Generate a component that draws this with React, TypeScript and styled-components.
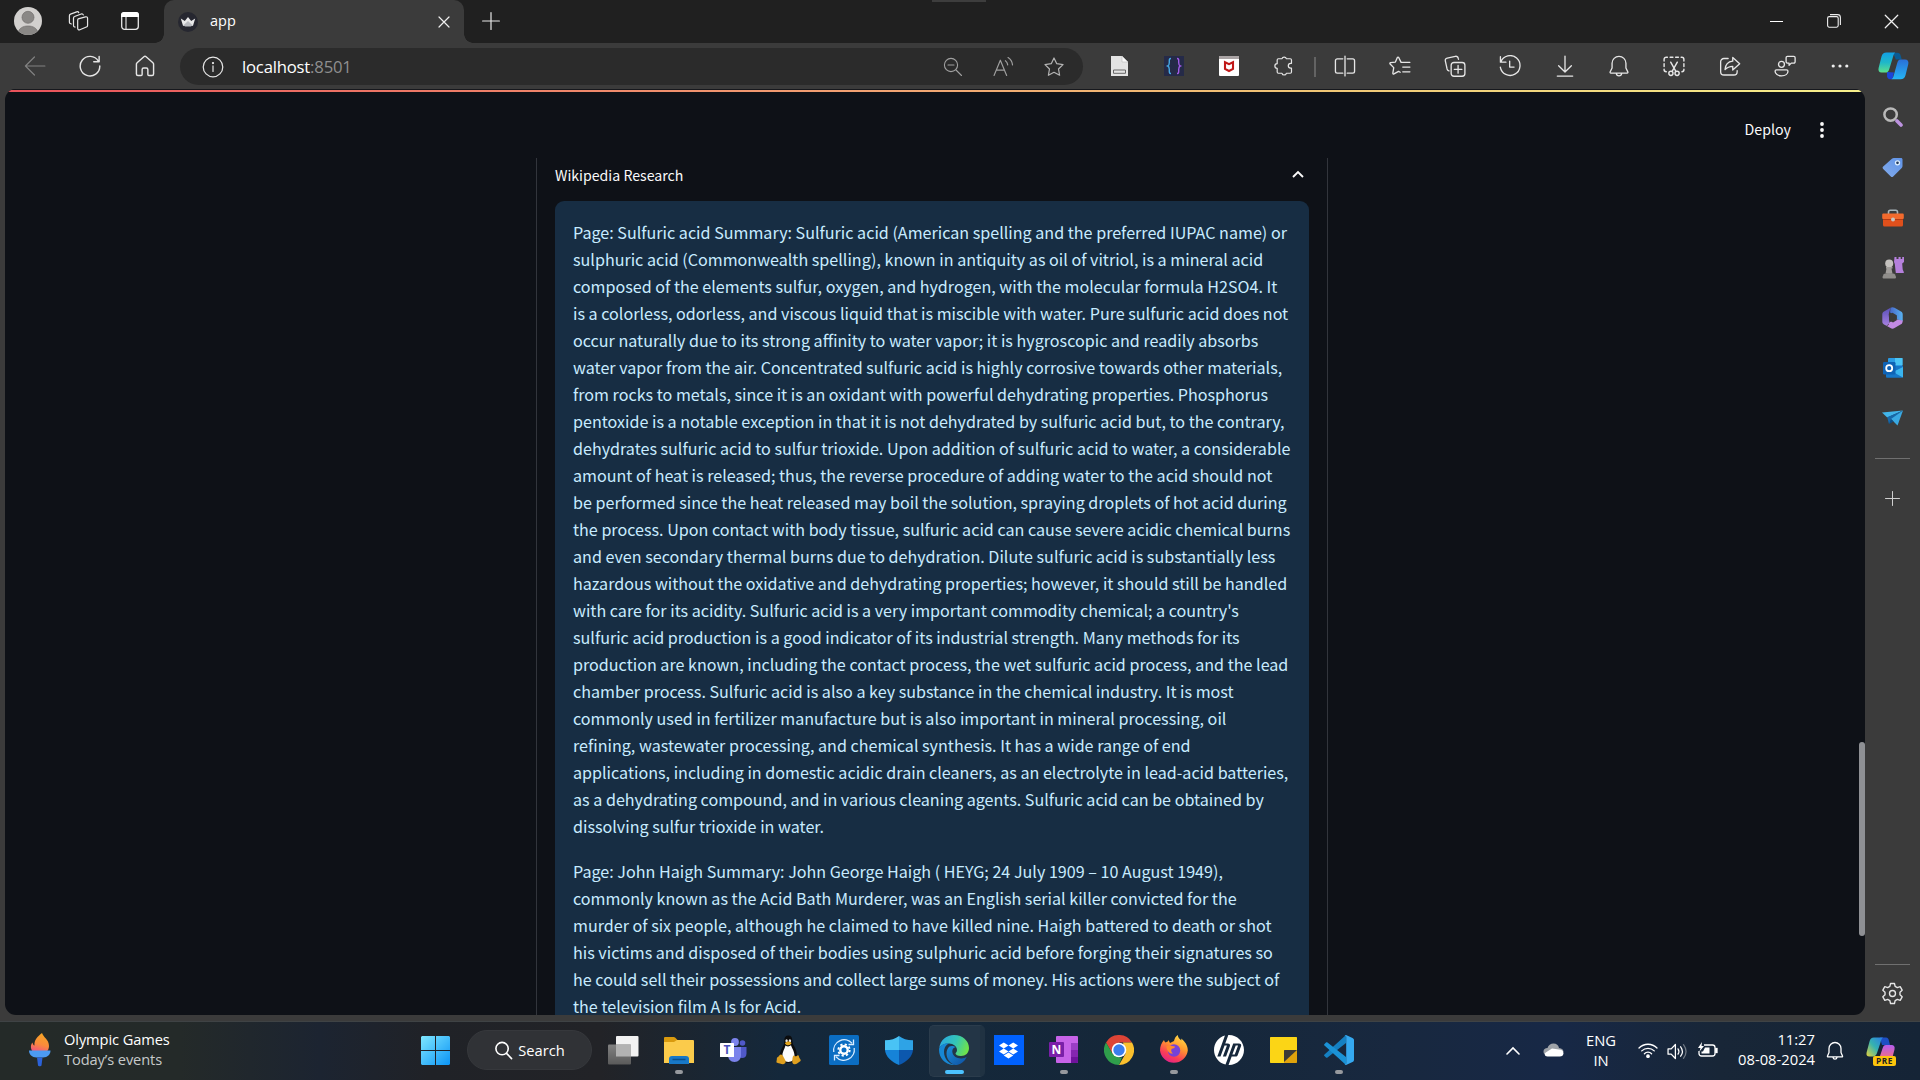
import React from "react";
import styled, { createGlobalStyle } from "styled-components";
import { SiHp, SiDropbox } from "react-icons/si";

const GlobalStyle = createGlobalStyle`
  * { box-sizing: border-box; }
  body { margin: 0; background: #202020; overflow: hidden; }
  p { margin: 0; }
  svg { display: block; flex: none; }
`;

const ui = `"Open Sans", "Noto Sans", sans-serif`;
const source = `"Noto Sans CJK JP", "Noto Sans", sans-serif`;

/* ---------- shell ---------- */
const Desktop = styled.div`
  width: 1920px;
  height: 1080px;
  display: flex;
  flex-direction: column;
  background: #3b3b3b;
  font-family: ${ui};
  color: #fff;
`;

const TabStrip = styled.header`
  height: 43px;
  background: #202020;
  display: flex;
  position: relative;
`;
const TopHandle = styled.div`
  position: absolute;
  left: 932px;
  top: 0;
  width: 54px;
  height: 2px;
  background: #3d3d3d;
`;
const StripTools = styled.div`
  width: 164px;
  padding: 0 6px 1px 1px;
  display: flex;
`;
const Slot = styled.div<{ $w?: number; $up?: number }>`
  width: ${(p) => p.$w ?? 55}px;
  padding-bottom: ${(p) => p.$up ?? 0}px;
  flex: none;
  display: flex;
  align-items: center;
  justify-content: center;
`;
const Tab = styled.div`
  width: 300px;
  background: #3b3b3b;
  border-radius: 10px 10px 0 0;
  display: flex;
  align-items: center;
  padding: 0 14px 0 14px;
  position: relative;
  &::before,
  &::after {
    content: "";
    position: absolute;
    bottom: 0;
    width: 9px;
    height: 9px;
  }
  &::before {
    left: -9px;
    background: radial-gradient(circle at 0 0, transparent 8.5px, #3b3b3b 9px);
  }
  &::after {
    right: -9px;
    background: radial-gradient(circle at 100% 0, transparent 8.5px, #3b3b3b 9px);
  }
`;
const TabTitle = styled.span`
  flex: 1;
  padding-left: 12px;
  font-size: 14.5px;
  line-height: 20px;
  margin-top: -2px;
`;
const WindowButtons = styled.div`
  margin-left: auto;
  display: flex;
`;

const Toolbar = styled.nav`
  height: 46px;
  display: flex;
  padding: 0 0 0 7px;
  align-items: stretch;
`;
const AddressBar = styled.div`
  width: 903px;
  flex: none;
  height: 37px;
  margin: 5px 9px 0 8px;
  border-radius: 19px;
  background: #2b2b2b;
  display: flex;
  padding-left: 5px;
  padding-right: 4px;
`;
const Url = styled.span`
  flex: 1;
  padding-left: 2px;
  font-size: 16.7px;
  line-height: 37px;
  letter-spacing: -0.2px;
  em { font-style: normal; color: #8f8f8f; }
`;
const ToolDivider = styled.div`
  width: 2px;
  height: 20px;
  margin: 14px 1px 0 2px;
  background: #636363;
`;

const Body = styled.div`
  height: 932px;
  display: flex;
  padding-left: 5px;
`;
const Page = styled.main`
  width: 1860px;
  height: 926px;
  border-radius: 11px;
  background: #0e1117;
  overflow: hidden;
  display: flex;
  flex-direction: column;
  position: relative;
`;
const Rainbow = styled.div`
  height: 3px;
  border-top: 1px solid #16181d;
  flex: none;
  background: linear-gradient(90deg, #e8525b, #f2a072 45%, #efc575 70%, #f6f08c);
`;
const AppHeader = styled.div`
  height: 66px;
  flex: none;
  display: flex;
  justify-content: flex-end;
  align-items: center;
  padding: 9px 35px 0 0;
  gap: 23px;
`;
const Deploy = styled.span`
  font: 14.2px/24px ${source};
  color: #fafafa;
  padding-bottom: 2px;
`;
const Kebab = styled.div`
  width: 16px;
  display: flex;
  justify-content: center;
`;
const Scrollbar = styled.div`
  position: absolute;
  right: 0;
  top: 653px;
  width: 6px;
  height: 194px;
  border-radius: 3px;
  background: #8e9094;
`;
const Expander = styled.section`
  width: 792px;
  height: 857px;
  margin-left: 531px;
  border: solid #32353c;
  border-width: 0 1px;
  padding: 0 18px 0 18px;
  font-family: ${source};
`;
const ExpanderHead = styled.div`
  height: 43px;
  display: flex;
  align-items: center;
  justify-content: space-between;
  padding: 0 5px 10px 0;
  font-size: 14.15px;
  line-height: 24px;
  color: #fafafa;
  svg { margin-top: -1px; }
`;
const InfoBox = styled.div`
  background: #172d43;
  color: #c7ebff;
  border-radius: 9px;
  padding: 18px 17px 18px 18px;
  height: 837px;
  display: flex;
  flex-direction: column;
  gap: 18px;
`;
const Line = styled.span`
  display: block;
  height: 27px;
  font-size: 16.13px;
  line-height: 27px;
  white-space: nowrap;
`;

const Sidebar = styled.aside`
  width: 55px;
  display: flex;
  flex-direction: column;
  align-items: center;
  padding-top: 2px;
`;
const SideItem = styled.div<{ $h?: number }>`
  height: ${(p) => p.$h ?? 50}px;
  display: flex;
  align-items: center;
`;
const SideRule = styled.div`
  width: 35px;
  height: 1px;
  background: #707070;
`;
const Spacer = styled.div`
  flex: 1;
`;

/* ---------- taskbar ---------- */
const Taskbar = styled.footer`
  height: 59px;
  border-top: 1px solid #3f4345;
  display: flex;
  align-items: stretch;
  background: linear-gradient(
    90deg,
    #242a28 0,
    #242a29 180px,
    #1c2431 320px,
    #202227 430px,
    #222327 600px,
    #14283b 780px,
    #152739 1150px,
    #18283f 1400px,
    #172846 1560px,
    #182637 1720px,
    #152436 1920px
  );
`;
const Widget = styled.div`
  width: 408px;
  display: flex;
  padding: 7px 0 0 28px;
  gap: 12px;
  svg { margin-top: 4px; }
`;
const WidgetText = styled.div`
  font-size: 14.65px;
  line-height: 20px;
  letter-spacing: -0.1px;
  span { display: block; color: #c6c9c9; }
`;
const SearchPill = styled.div`
  width: 125px;
  height: 40px;
  margin: 8px 4px 0 4px;
  border-radius: 20px;
  background: #303236;
  border: 1px solid #36383c;
  display: flex;
  align-items: center;
  justify-content: center;
  gap: 5px;
  font-size: 14.7px;
`;
const AppButton = styled.div<{ $active?: boolean }>`
  width: 55px;
  flex: none;
  position: relative;
  display: flex;
  align-items: center;
  justify-content: center;
  padding-bottom: 2px;
  z-index: 0;
  &::before {
    content: "";
    display: ${(p) => (p.$active ? "block" : "none")};
    position: absolute;
    z-index: -1;
    left: 3px;
    top: 3px;
    width: 50px;
    height: 50px;
    border-radius: 5px;
    background: #233546;
    border: 1px solid #2b3c4c;
    border-right: 5px solid #203242;
  }
`;
const Marker = styled.i<{ $active?: boolean }>`
  position: absolute;
  bottom: 6px;
  left: 50%;
  width: ${(p) => (p.$active ? 19 : 8)}px;
  height: 4px;
  margin-left: ${(p) => (p.$active ? -9 : -4)}px;
  border-radius: 2px;
  background: ${(p) => (p.$active ? "#4cc2ff" : "#96999e")};
`;
const Tray = styled.div`
  margin-left: auto;
  width: 427px;
  display: flex;
`;
const TrayText = styled.div<{ $w: number; $right?: boolean }>`
  width: ${(p) => p.$w}px;
  padding-top: ${(p) => (p.$right ? 7 : 8)}px;
  text-align: ${(p) => (p.$right ? "right" : "center")};
  font-size: 14.75px;
  line-height: 20px;
  white-space: nowrap;
  display: flex;
  flex-direction: column;
`;

/* ---------- icons ---------- */
type IconProps = { s?: number; w?: number; c?: string; children: React.ReactNode };
const Ico = ({ s = 22, w = 1.1, c = "#e6e6e6", children }: IconProps) => (
  <svg width={s} height={s} viewBox="0 0 20 20" fill="none" stroke={c} strokeWidth={w} strokeLinecap="round" strokeLinejoin="round">
    {children}
  </svg>
);

const Avatar = () => (
  <svg width="28" height="28" viewBox="0 0 28 28">
    <defs><clipPath id="av"><circle cx="14" cy="14" r="14" /></clipPath></defs>
    <g clipPath="url(#av)">
      <rect width="28" height="28" fill="#d2d0ce" />
      <circle cx="14" cy="10.3" r="6" fill="#8a8886" stroke="#72706e" strokeWidth=".7" />
      <path d="M4 26c1-5 5-7 10-7s9 2 10 7v4H4z" fill="#8a8886" stroke="#72706e" strokeWidth=".7" />
    </g>
  </svg>
);
const Workspaces = () => (
  <Ico s={22} w={1.1}>
    <path d="M10.2 8.1l6.6-1.9c1-.3 1.9.4 1.9 1.4v6.4c0 .7-.5 1.3-1.1 1.5l-5.9 2.5c-1 .4-2-.2-2-1.3V9.5c0-.7 0-1.2.5-1.4z" />
    <path d="M7.3 15.5l-.6-.2c-.5-.2-.8-.6-.8-1.2V7.4c0-.8.4-1.3 1-1.5l6-2.3c.8-.3 1.6 0 1.9.8" />
    <path d="M3.9 12.7l-.9-.4c-.5-.2-.8-.6-.8-1.2V5.2c0-.8.4-1.3 1-1.5l5.6-2c.8-.3 1.6 0 1.9.8" />
  </Ico>
);
const TabActions = () => (
  <svg width="18" height="18" viewBox="0 0 18 18">
    <rect x=".7" y=".7" width="16.6" height="16.6" rx="2.8" fill="none" stroke="#e8e8e8" strokeWidth="1.3" />
    <path d="M0 5V3a3 3 0 0 1 3-3h12a3 3 0 0 1 3 3v2z" fill="#fff" />
    <path d="M5 5v12.5" stroke="#e8e8e8" strokeWidth="1.1" />
  </svg>
);
const Crown = () => (
  <svg width="20" height="20" viewBox="0 0 20 20">
    <circle cx="10" cy="10" r="10" fill="#262730" />
    <path d="M2.8 6.4l4 2.6L10 5l3.2 4 4-2.6-2.2 7.3c-3 .8-7 .8-10 0z" fill="#e9e9ea" />
    <path d="M5 13.7L10 9l5 4.7c-3 .8-7 .8-10 0z" fill="#b9bbc0" />
  </svg>
);
const Cross = ({ s = 12, w = 1.2 }: { s?: number; w?: number }) => (
  <svg width={s} height={s} viewBox="0 0 12 12" stroke="#f0f0f0" strokeWidth={w} strokeLinecap="round"><path d="M1 1l10 10M11 1L1 11" /></svg>
);
const Plus = ({ s = 18, c = "#e8e8e8" }: { s?: number; c?: string }) => (
  <svg width={s} height={s} viewBox="0 0 18 18" stroke={c} strokeWidth="1.2" strokeLinecap="round"><path d="M9 .6v16.8M.6 9h16.8" /></svg>
);

const STAR = "M10 1.8l2.5 5.2 5.7.8-4.1 4 1 5.7L10 14.8l-5.1 2.7 1-5.7-4.1-4 5.7-.8z";

const Copilot = () => (
  <svg width="31" height="28" viewBox="0 0 31 28">
    <defs>
      <linearGradient id="cpa" x1="0" y1="0" x2="0" y2="1"><stop offset="0" stopColor="#12a0e6" /><stop offset=".5" stopColor="#20b8c8" /><stop offset="1" stopColor="#5fe08a" /></linearGradient>
      <linearGradient id="cpb" x1="0" y1="0" x2="0" y2="1"><stop offset="0" stopColor="#2a6fd8" /><stop offset="1" stopColor="#25b5f4" /></linearGradient>
    </defs>
    <path d="M15 .8h4.500c1.800 0 2.600 1 3.100 2.800l1.200 3.800h-6z" fill="#0a5b93" />
    <path d="M9 20l7 .5-1.600 6.700H12c-1.700 0-2.400-1-2.900-2.700z" fill="#1b45d8" />
    <path d="M8.500.6h8.700c-1 .8-1.500 2-2 3.600l-3.800 12.500c-.7 2.500-2 3.900-4.300 3.900H3.600C1 20.600 0 18.500.6 16L3.500 4.600C4.200 2 5.800.6 8.500.6z" fill="url(#cpa)" />
    <path d="M22.500 7.500h4.400c2.800 0 4 2 3.400 4.500l-2.800 11.300c-.7 2.600-2.200 4-5 4h-9c1.200-.7 1.700-2 2.200-3.700l3.400-12.200c.7-2.500 1.600-3.900 3.400-3.900z" fill="url(#cpb)" />
  </svg>
);

const Penguin = () => (
  <svg width="25" height="30" viewBox="0 0 25 30">
    <path d="M12.300.5c2.700 0 4 2 4 4.800 0 3.200 1.200 4.700 2.700 7.500 1.500 3 2.300 6 1.500 9.200-.5 3-4 6-8.200 6S4.500 25.500 4 22.500c-.6-3.500.6-7 2.300-10C7.700 10 8.400 8.500 8.300 5.500 8.200 2.500 9.500.5 12.300.5z" fill="#0b0c0e" />
    <path d="M9.500 10.500c1.700 1.200 3.800 1.200 5.500-.2 1 3 3.800 6.700 3.500 11-.3 3.700-3 5.700-6.200 5.700s-5.800-2.300-6-5.700c-.2-3.700 2.200-7.300 3.200-10.800z" fill="#fdfdfd" />
    <ellipse cx="10.6" cy="5.7" rx="1.2" ry="1.5" fill="#e8e8e8" />
    <ellipse cx="13.9" cy="5.7" rx="1.2" ry="1.5" fill="#e8e8e8" />
    <path d="M8.800 8.200c1-1 2.200-1.700 3.500-1.700s2.500.6 3.300 1.500c-.7 1.300-2 2.300-3.400 2.300s-2.700-.9-3.400-2.100z" fill="#e3a51c" />
    <path d="M1.800 22c1.200-.5 1.700-2.500 3.200-2.500 1.800 0 3 3.500 4.200 5.500 1 1.700.3 4-2 4.200-2.200.1-4-1-6-1.400C-.3 27.500.8 26 .8 24.500c0-1 0-2 1-2.500zM17.500 20.500c1 1.200 3.500 1 4.500-.5 1.200.6.8 2.300 1.800 3.500 1.500 1.700 1 2.500-.6 3.500-1.700 1-2.600 2.500-4.700 2.300-2-.2-2.400-2-2.200-4 .2-1.700.2-3.700 1.200-4.800z" fill="#dfa01f" />
  </svg>
);

/* ---------- page content ---------- */
const PARAGRAPHS: string[][] = [
  [
    "Page: Sulfuric acid Summary: Sulfuric acid (American spelling and the preferred IUPAC name) or",
    "sulphuric acid (Commonwealth spelling), known in antiquity as oil of vitriol, is a mineral acid",
    "composed of the elements sulfur, oxygen, and hydrogen, with the molecular formula H2SO4. It",
    "is a colorless, odorless, and viscous liquid that is miscible with water. Pure sulfuric acid does not",
    "occur naturally due to its strong affinity to water vapor; it is hygroscopic and readily absorbs",
    "water vapor from the air. Concentrated sulfuric acid is highly corrosive towards other materials,",
    "from rocks to metals, since it is an oxidant with powerful dehydrating properties. Phosphorus",
    "pentoxide is a notable exception in that it is not dehydrated by sulfuric acid but, to the contrary,",
    "dehydrates sulfuric acid to sulfur trioxide. Upon addition of sulfuric acid to water, a considerable",
    "amount of heat is released; thus, the reverse procedure of adding water to the acid should not",
    "be performed since the heat released may boil the solution, spraying droplets of hot acid during",
    "the process. Upon contact with body tissue, sulfuric acid can cause severe acidic chemical burns",
    "and even secondary thermal burns due to dehydration. Dilute sulfuric acid is substantially less",
    "hazardous without the oxidative and dehydrating properties; however, it should still be handled",
    "with care for its acidity. Sulfuric acid is a very important commodity chemical; a country's",
    "sulfuric acid production is a good indicator of its industrial strength. Many methods for its",
    "production are known, including the contact process, the wet sulfuric acid process, and the lead",
    "chamber process. Sulfuric acid is also a key substance in the chemical industry. It is most",
    "commonly used in fertilizer manufacture but is also important in mineral processing, oil",
    "refining, wastewater processing, and chemical synthesis. It has a wide range of end",
    "applications, including in domestic acidic drain cleaners, as an electrolyte in lead-acid batteries,",
    "as a dehydrating compound, and in various cleaning agents. Sulfuric acid can be obtained by",
    "dissolving sulfur trioxide in water.",
  ],
  [
    "Page: John Haigh Summary: John George Haigh ( HEYG; 24 July 1909 – 10 August 1949),",
    "commonly known as the Acid Bath Murderer, was an English serial killer convicted for the",
    "murder of six people, although he claimed to have killed nine. Haigh battered to death or shot",
    "his victims and disposed of their bodies using sulphuric acid before forging their signatures so",
    "he could sell their possessions and collect large sums of money. His actions were the subject of",
    "the television film A Is for Acid.",
  ],
];

const BrowserTools = () => (
  <>
    <Slot><svg width="17" height="20" viewBox="0 0 17 20"><path d="M0 0h11l6 6v14H0z" fill="#e3e3e3" /><path d="M11 0v6h6z" fill="#fafafa" stroke="#bbb" strokeWidth=".6" /><path d="M2.500 14h12v3.300h-12z" fill="none" stroke="#666" strokeWidth="1" /></svg></Slot>
    <Slot $w={54}><svg width="20" height="20" viewBox="0 0 20 20" fill="none" strokeWidth="1.400"><rect width="20" height="20" fill="#252a48" /><path d="M7 2.500c-2 0-1.700 1.500-1.700 4 0 2-.2 3-1.500 3.500 1.300.5 1.500 1.500 1.500 3.500 0 2.500-.3 4 1.700 4" stroke="#45a9e6" /><path d="M13 2.500c2 0 1.700 1.500 1.700 4 0 2 .2 3 1.500 3.500-1.300.5-1.500 1.500-1.500 3.500 0 2.500.3 4-1.700 4" stroke="#a35be8" /></svg></Slot>
    <Slot><svg width="20" height="20" viewBox="0 0 20 20"><rect width="20" height="20" rx="1" fill="#fff" /><path d="M0 0h20v3H0z" fill="#a9a3a4" /><path d="M6 6.200l4 2 4-2v6.600l-4 2.200-4-2.200z" fill="none" stroke="#c01818" strokeWidth="2.100" /></svg></Slot>
    <Slot $w={56}><Ico><path d="M8.200 3.400a2 2 0 0 1 3.900 0h3.600c.6 0 1.100.5 1.100 1.100v3.100h-.7a2.200 2.200 0 0 0 0 4.400h.7v3.500c0 .6-.5 1.100-1.100 1.100h-3.600a2 2 0 0 1-3.900 0H4.900c-.6 0-1.100-.5-1.100-1.100v-3.400a2.100 2.100 0 0 1 0-4.200V4.500c0-.6.5-1.100 1.100-1.100z" /></Ico></Slot>
    <ToolDivider />
    <Slot><Ico w={1.2}><path d="M8 3.500H3c-1 0-1.700.7-1.700 1.700v9.600c0 1 .7 1.700 1.700 1.700h5M12 3.500h5c1 0 1.700.7 1.700 1.700v9.600c0 1-.7 1.700-1.700 1.700h-5M10 1v18" /></Ico></Slot>
    <Slot><Ico w={1.2}><path d="M13.200 6.700H11L8.800 2.200a.7.700 0 0 0-1.200 0L5.800 6.400l-4.400.6c-.6.1-.8.700-.4 1.100l3.300 3.400-.8 5c-.1.600.4 1 1 .7l4.200-2.300 1.500.8M12.500 6.700h6.500M12.500 11h6.500M12.500 15.300h6.500" /></Ico></Slot>
    <Slot><Ico w={1.2}><rect x="6.5" y="6.8" width="12.5" height="12.5" rx="2.5" /><path d="M12.800 9.500v7M9.300 13h7M4.500 14.500c-1-.3-1.500-1-1.700-1.800L1.200 5.400c-.3-1.300.4-2.300 1.700-2.600l7.400-1.600c1.300-.3 2.300.4 2.600 1.700l.3 1" /></Ico></Slot>
    <Slot><Ico w={1.2}><path d="M1.300 1.500v5h5M1.700 6.300A9 9 0 1 1 1.200 11M9.700 5.500V11h4" /></Ico></Slot>
    <Slot><Ico w={1.2}><path d="M10 1v14.300M4.200 9.800l5.800 5.700 5.800-5.700M3 19.200h14" /></Ico></Slot>
    <Slot $w={54}><Ico w={1.2}><path d="M10 1.200a6.300 6.300 0 0 0-6.300 6.300v4.300L2 15.300c-.3.600 0 1.100.6 1.100h14.800c.6 0 .9-.5.6-1.100l-1.700-3.500V7.500A6.300 6.300 0 0 0 10 1.200zM7.500 16.600c.2 1.500 1.200 2.400 2.500 2.400s2.300-.9 2.500-2.400" /></Ico></Slot>
    <Slot $w={56}><Ico w={1.3}><path d="M1 5.500V4c0-1.300.8-2 2-2h1M6.500 2h2.500M11.500 2H14M16.500 2h.6c1.200 0 1.900.8 1.900 2v1.500M19 8v2.500M19 13v.5c0 1-.8 1.700-1.800 1.700M1 8v2.500M1 13v.5c0 1 .8 1.700 2 1.700" /><path d="M7 6.500l4.700 8.300M13 6.500l-4.700 8.300" /><circle cx="7.200" cy="16.700" r="1.900" /><circle cx="12.800" cy="16.700" r="1.900" /></Ico></Slot>
    <Slot><Ico w={1.2}><path d="M8.300 3.200H4.500A3 3 0 0 0 1.500 6.200v9a3 3 0 0 0 3 3h9a3 3 0 0 0 3-3v-1" /><path d="M12.500 2.200l6.300 5.800-6.300 5.700v-3.400c-3.300 0-5 .8-7 3 .3-4.700 2.700-7.300 7-7.700z" /></Ico></Slot>
    <Slot><Ico w={1.2}><circle cx="6.800" cy="8.500" r="2.700" /><path d="M2.200 13.500h9.300c.8 0 1.200.5 1.200 1.200 0 2.500-2.400 4.300-5.800 4.300S1 17.200 1 14.700c0-.7.5-1.200 1.200-1.200zM12.200 1.200h5.800c.7 0 1.200.5 1.200 1.200v3.800c0 .7-.5 1.200-1.200 1.200h-2.300l-2 1.900V7.400h-1.500c-.7 0-1.200-.5-1.200-1.200V2.400c0-.7.5-1.200 1.200-1.200z" /></Ico></Slot>
    <Slot><svg width="18" height="4" viewBox="0 0 18 4" fill="#eee"><circle cx="2.200" cy="2" r="1.600" /><circle cx="9" cy="2" r="1.600" /><circle cx="15.800" cy="2" r="1.600" /></svg></Slot>
    <Slot $w={53}><Copilot /></Slot>
  </>
);

const SideIcons = () => (
  <>
    <SideItem $h={51}>
      <svg width="20" height="20" viewBox="0 0 20 20" fill="none"><circle cx="7.600" cy="7.600" r="6.200" stroke="#b9b9b9" strokeWidth="2.500" /><path d="M14 14l4 4" stroke="#bd93e0" strokeWidth="3.600" strokeLinecap="round" /></svg>
    </SideItem>
    <SideItem>
      <svg width="21" height="21" viewBox="0 0 21 21"><defs><linearGradient id="tg" x1="1" y1="0" x2="0" y2="1"><stop stopColor="#5f93e8" /><stop offset="1" stopColor="#83abea" /></linearGradient></defs><path d="M12 1h7c.9 0 1.500.6 1.500 1.500V9c0 .8-.2 1.300-.8 1.900l-8.500 8.500c-.8.800-1.600.8-2.400 0L1.200 12c-.8-.8-.8-1.600 0-2.400l8.700-7.900c.6-.5 1.200-.7 2.100-.7z" fill="url(#tg)" /><circle cx="15.500" cy="5.800" r="2" fill="#23395c" stroke="#dff0ff" strokeWidth="1.300" /></svg>
    </SideItem>
    <SideItem $h={51}>
      <svg width="22" height="18" viewBox="0 0 22 18"><path d="M6.500 5V3c0-1.200.6-1.800 1.800-1.800h5.400c1.200 0 1.800.6 1.800 1.800v2" fill="none" stroke="#a8b4ba" strokeWidth="1.600" /><rect x="1" y="8" width="20" height="9.500" rx="1.500" fill="#e0501c" /><path d="M1.500 4.500h19c.8 0 1.300.5 1.300 1.300v2.700c0 1.400-.8 2-2 2H2.200c-1.200 0-2-.6-2-2V5.800c0-.8.500-1.300 1.300-1.300z" fill="#f26a2d" /><path d="M1 10.500h20" stroke="#b63a12" /><circle cx="11" cy="10.600" r="2" fill="#c9c4c0" /></svg>
    </SideItem>
    <SideItem $h={49}>
      <svg width="22" height="22" viewBox="0 0 22 22"><path d="M12.500 0h2v2h2V0h2.200v2h1.500V0H22v5l-1.800 1.500.5 6 1.100 2.500v1h-8l-1-9-.8-2z" fill="#b580dc" /><circle cx="7.200" cy="6.500" r="4" fill="#c4c1be" /><path d="M4 10h6.500v1.500H9.500l1 5h-7l1-5H4z" fill="#a09d9a" /><path d="M1.500 17.500c1.500-2 10-2 11.500 0l1 2.500c0 1-.5 1.500-1.500 1.500H2c-1 0-1.500-.5-1.500-1.500z" fill="#8f8d8a" /></svg>
    </SideItem>
    <SideItem $h={51}>
      <svg width="21" height="22" viewBox="0 0 21 22"><defs><linearGradient id="ma" x1="0" x2="0" y1="0" y2="1"><stop stopColor="#5a50b8" /><stop offset="1" stopColor="#a780e0" /></linearGradient><linearGradient id="mb"><stop stopColor="#4767c9" /><stop offset="1" stopColor="#58b2f1" /></linearGradient></defs><path d="M8.500.8L2 4.600C.8 5.300.3 6.200.3 7.500v7c0 1.300.5 2.200 1.700 2.900l2.500 1.400 3-2.500-.8-9z" fill="url(#ma)" /><path d="M8.500.8c1.300-.8 2.700-.8 4 0L19 4.600c1.200.7 1.700 1.600 1.700 2.900v6.700l-6-2V8.800L8 5.500z" fill="url(#mb)" /><path d="M20.700 13.500c0 2-.4 3-1.700 3.800l-6.500 3.800c-1.300.8-2.700.8-4 0L4 18.500c2 .5 3-.4 3-2.200l1-1.300 6.500-2.600z" fill="#c38ae4" /><path d="M7 7.800l3.500-2 4.200 2.500v5l-3.700 2.200-4-2.300z" fill="#3b3b3b" /></svg>
    </SideItem>
    <SideItem>
      <svg width="20" height="20" viewBox="0 0 20 20"><rect x="5" y="0" width="14.500" height="14" rx="1" fill="#2a9be4" /><path d="M12 0h7.500v7H12z" fill="#4ac4f4" /><path d="M3 8h17v10.500c0 .8-.5 1.300-1.300 1.300H4.300c-.8 0-1.300-.5-1.300-1.300z" fill="#1677c8" /><path d="M20 9v10.500L10 14z" fill="#3ab5ef" /><rect x="0" y="4" width="12.500" height="12.500" rx="1.300" fill="#0f63b5" /><circle cx="6.200" cy="10.200" r="3" fill="none" stroke="#fff" strokeWidth="1.800" /></svg>
    </SideItem>
    <SideItem>
      <svg width="21" height="16" viewBox="0 0 21 16"><path d="M21 .5L0 2.500l5.200 5z" fill="#41b5ea" /><path d="M21 .5L5.200 7.200 7 14l3-4z" fill="#1768a8" /><path d="M21 .5L9 9l6.500 6.500z" fill="#3aa9e2" /><path d="M7 14l2-5 2.700 2.500z" fill="#0e4e86" /></svg>
    </SideItem>
    <SideItem $h={15}>{null}</SideItem>
    <SideRule />
    <SideItem $h={78}><Plus s={15} c="#cfcfcf" /></SideItem>
    <Spacer />
    <SideRule />
    <SideItem $h={56}>
      <Ico s={23} w={1.2}><path d="M8.300 1.300h3.400l.6 2.500 1.900 1.100 2.500-.8 1.700 3-1.900 1.800v2.200l1.900 1.800-1.700 3-2.500-.8-1.900 1.100-.6 2.500H8.300l-.6-2.500-1.900-1.100-2.500.8-1.700-3 1.900-1.800V8.900L1.600 7.100l1.700-3 2.500.8 1.900-1.100z" /><circle cx="10" cy="10" r="2.600" /></Ico>
    </SideItem>
  </>
);

const TaskApps = () => (
  <>
    <AppButton>
      <svg width="31" height="29" viewBox="0 0 31 29"><defs><linearGradient id="tv" x1="0" x2="0" y1="0" y2="1"><stop stopColor="#828282" /><stop offset="1" stopColor="#5a5a5a" /></linearGradient></defs><rect x="8" y="0" width="22.500" height="20.500" rx="1" fill="#f2f2f2" /><rect x="0" y="8.500" width="23" height="20" rx="1" fill="url(#tv)" /><path d="M8 8.500h15v12H8z" fill="#b2b2b2" /></svg>
    </AppButton>
    <AppButton>
      <svg width="30" height="28" viewBox="0 0 30 28"><path d="M0 2.200C0 1.400.5 1 1.200 1h8.500c.6 0 1 .2 1.400.6L13.500 4V9H0z" fill="#d99a0e" /><path d="M0 6h10l3-2h15.800c.7 0 1.200.5 1.200 1.200V27H0z" fill="#fbcb4b" /><path d="M5 28v-5c0-2 1-3 3-3h14c2 0 3 1 3 3v5z" fill="#1878c7" /><path d="M8.500 23.500h13" stroke="#0b4f8a" strokeWidth="1.500" /></svg>
      <Marker />
    </AppButton>
    <AppButton>
      <svg width="27" height="24" viewBox="0 0 27 24"><circle cx="22.500" cy="5" r="2.800" fill="#5059c9" /><circle cx="15" cy="4" r="3.900" fill="#7b83eb" /><path d="M18 9h8.500v6.500c0 3-1.700 4.500-4.300 4.500S18 18 18 16z" fill="#5059c9" /><path d="M8 9h13v8c0 4-2.500 7-6.500 7S8 21 8 17z" fill="#7b83eb" /><rect x="0" y="5" width="14" height="14" rx=".6" fill="#fff" /><text x="7" y="16.200" fontFamily="Open Sans" fontWeight="700" fontSize="12" fill="#4b53bc" textAnchor="middle">T</text></svg>
    </AppButton>
    <AppButton><Penguin /></AppButton>
    <AppButton>
      <svg width="30" height="30" viewBox="0 0 30 30" fill="none"><rect width="30" height="30" rx="1.500" fill="#0b6dc2" /><path d="M4.800 17A10.500 10.500 0 0 1 23 8.300M25.200 13A10.500 10.500 0 0 1 7 21.700" stroke="#d8ecff" strokeWidth="1.300" /><path d="M24.500 4.500v5h-5M5.500 25.500v-5h5" stroke="#d8ecff" strokeWidth="1.300" /><circle cx="15" cy="15" r="3.700" stroke="#fff" strokeWidth="2.400" /><circle cx="15" cy="15" r="5.700" stroke="#fff" strokeWidth="1.900" strokeDasharray="2.200 2.280" /></svg>
    </AppButton>
    <AppButton>
      <svg width="28" height="29" viewBox="0 0 28 29"><path d="M14 0c3.500 2.800 8 4.200 14 4.300V14H14z" fill="#2ea3e6" /><path d="M14 0C10.500 2.800 6 4.200 0 4.300V14h14z" fill="#49c3f5" /><path d="M0 14h14v15C6 25.500.8 21 0 14z" fill="#1683d8" /><path d="M28 14H14v15c8-3.500 13.200-8 14-15z" fill="#0c58ae" /></svg>
    </AppButton>
    <AppButton $active>
      <svg width="30" height="30" viewBox="0 0 30 30"><defs><linearGradient id="ea" x1="0" y1=".2" x2="1" y2=".5"><stop stopColor="#2aa7e4" /><stop offset=".55" stopColor="#34c6b6" /><stop offset="1" stopColor="#6fe24a" /></linearGradient><linearGradient id="eb" x1="0" y1="0" x2="1" y2="1"><stop stopColor="#1b8fdc" /><stop offset="1" stopColor="#0f4f9f" /></linearGradient></defs><path d="M.2 13C1.500 5 7.500 0 15 0c9 0 15 6.200 15 13 0 5-3.500 8-8 8-3.500 0-5.500-1.500-5.500-2.500 0-.7 1.500-1.300 1.500-3.500 0-3.500-3.500-6.500-8-6.500C5.500 8.500 1.500 10.500.2 13z" fill="url(#ea)" /><path d="M.2 13C1.300 10.500 5 7.800 10 8.300c-3.700 2-5 5-5 8.500C5 23.500 9.500 29 16 30 7 30.600 0 23.500 0 15c0-.7.100-1.300.2-2z" fill="#1787d4" /><path d="M10.500 11.500c1.500-1 4.500-.8 6.200.7-3 .5-3.700 3-3.200 5.500.8 4 5.500 6.500 10.500 5.500 1.500-.3 2.700-.8 3.700-1.500-2 5-6.500 8.300-11.700 8.300C11 28.500 7.500 23.500 7.500 18.500c0-3 1.200-5.500 3-7z" fill="url(#eb)" /></svg>
      <Marker $active />
    </AppButton>
    <AppButton>
      <DropboxTile><SiDropbox size={19} color="#fff" /></DropboxTile>
    </AppButton>
    <AppButton>
      <svg width="29" height="28" viewBox="0 0 29 28"><rect x="7" y="0" width="22" height="27" rx="1" fill="#c763e8" /><path d="M22 7h7v7h-7z" fill="#9a3fc4" /><path d="M22 14h7v7h-7z" fill="#8526b0" /><path d="M22 21h7v5c0 .6-.4 1-1 1h-6z" fill="#6f139c" /><rect x="0" y="6" width="15" height="15" rx="1" fill="#7a1fa8" /><text x="7.500" y="17.800" fontFamily="Open Sans" fontWeight="700" fontSize="12" fill="#fff" textAnchor="middle">N</text></svg>
      <Marker />
    </AppButton>
    <AppButton>
      <svg width="30" height="30" viewBox="0 0 30 30"><path d="M2 7.500a15 15 0 0 1 26 0H15L8.500 18.700z" fill="#dd4436" /><path d="M2 7.500L8.500 18.800 15 22.500h3L15 30A15 15 0 0 1 2 7.500z" fill="#2f9e4b" /><path d="M28 7.500A15 15 0 0 1 15 30l6.500-11.300L19 7.500z" fill="#fbc02d" /><circle cx="15" cy="15" r="7.300" fill="#fff" /><circle cx="15" cy="15" r="5.700" fill="#3b7ded" /></svg>
    </AppButton>
    <AppButton>
      <svg width="30" height="30" viewBox="0 0 30 30"><defs><linearGradient id="fa" x1=".8" y1="0" x2=".3" y2="1"><stop stopColor="#ffe14a" /><stop offset=".4" stopColor="#ff9a2e" /><stop offset=".75" stopColor="#fb3e56" /><stop offset="1" stopColor="#e0218a" /></linearGradient></defs><path d="M5 5c.3 1.300.8 2 1.600 2.500C8 7 9 6.500 9.500 5l1.500 3 4-2c.5-2.500 1.700-4.700 3.700-6 .3 2.500 2 4 3.500 5.500.2-.8.200-1.300 0-2 4 3 6.600 7.300 6.600 12A14 14 0 0 1 1 15.500C1 11 2.500 8 5 5z" fill="url(#fa)" /><circle cx="15" cy="15.500" r="6.200" fill="#7542d8" /><path d="M7.500 11c2-1.300 4-1 5.500 0l3 .5c0 1.500-2 2-3.500 2.500-.5 1.500-.5 3 1.500 4.500-4 .5-6.500-3-6.500-7.500z" fill="#ff8a2c" /></svg>
      <Marker />
    </AppButton>
    <AppButton><SiHp size={30} color="#fff" /></AppButton>
    <AppButton>
      <svg width="27" height="26" viewBox="0 0 27 26"><path d="M1 0h25c.6 0 1 .4 1 1v13L14 26H1c-.6 0-1-.4-1-1V1c0-.6.400-1 1-1z" fill="#fbd516" /><path d="M14 13h13v12c0 .6-.4 1-1 1H14z" fill="#e0a30c" /><path d="M14 14c0-.6.400-1 1-1h12L14 25z" fill="#3d3b36" /></svg>
    </AppButton>
    <AppButton>
      <svg width="30" height="30" viewBox="0 0 30 30"><path d="M22 0v8L3.500 22.500c-.5.400-1 .4-1.500 0l-1.500-1.400c-.6-.5-.6-1.100 0-1.600z" fill="#1580c2" /><path d="M22 30v-8L3.500 7.500c-.5-.4-1-.4-1.500 0L.5 8.900c-.6.500-.6 1.100 0 1.600z" fill="#1b92d6" /><path d="M22 0l6.500 3c1 .5 1.500 1.200 1.500 2.300v19.400c0 1.100-.5 1.800-1.500 2.300L22 30c-.6 0-1-.3-1.500-.8.8.4 1.700 0 1.700-1V1.800c0-1-.9-1.400-1.700-1C21 .3 21.400 0 22 0z" fill="#35a9f0" /></svg>
      <Marker />
    </AppButton>
  </>
);

const DropboxTile = styled.div`
  width: 30px;
  height: 30px;
  background: #0061fe;
  display: flex;
  align-items: center;
  justify-content: center;
`;

export default function App() {
  return (
    <Desktop>
      <GlobalStyle />
      <TabStrip>
        <TopHandle />
        <StripTools>
          <Slot $w={53}><Avatar /></Slot>
          <Slot $w={47}><Workspaces /></Slot>
          <Slot $w={57}><TabActions /></Slot>
        </StripTools>
        <Tab>
          <Crown />
          <TabTitle>app</TabTitle>
          <Cross />
        </Tab>
        <Slot $w={53} $up={2}><Plus /></Slot>
        <WindowButtons>
          <Slot $w={57}><svg width="13" height="2" viewBox="0 0 13 2"><path d="M0 .5h13" stroke="#fff" /></svg></Slot>
          <Slot $w={57} $up={1}><svg width="14" height="14" viewBox="0 0 14 14" fill="none" stroke="#eee" strokeWidth="1.100"><rect x=".6" y="2.600" width="10.600" height="10.600" rx="1.600" /><path d="M3 .6h7.500c1.700 0 2.900 1.200 2.900 2.900V11" /></svg></Slot>
          <Slot $w={58}><Cross s={15} w={1} /></Slot>
        </WindowButtons>
      </TabStrip>

      <Toolbar>
        <Slot><Ico c="#818181"><path d="M19 10H1.500M9.500 1.800L1.300 10l8.200 8.200" /></Ico></Slot>
        <Slot><Ico w={1.3}><path d="M17.600 5.500A8.900 8.900 0 1 0 18.900 10M18.300 1.300v4.900h-4.900" /></Ico></Slot>
        <Slot><Ico w={1.3}><path d="M2.200 8.300c0-.5.2-.9.6-1.200L9 1.600c.6-.5 1.400-.5 2 0l6.200 5.500c.4.300.6.7.6 1.200v8.900c0 .8-.6 1.400-1.400 1.400h-2.900c-.5 0-.9-.4-.9-.9v-4.500c0-.8-.6-1.400-1.400-1.400H8.800c-.8 0-1.400.6-1.400 1.400v4.500c0 .5-.4.9-.9.9H3.600c-.8 0-1.400-.6-1.400-1.400z" /></Ico></Slot>
        <AddressBar>
          <Slot><Ico><circle cx="10" cy="10" r="8.900" /><path d="M10 9v5" /><circle cx="10" cy="6.400" r=".5" fill="#e6e6e6" /></Ico></Slot>
          <Url>localhost<em>:8501</em></Url>
          <Slot $w={50}><Ico s={20} c="#a0a0a0"><circle cx="8" cy="8" r="6.600" /><path d="M5 8h6M13 13l5.500 5.500" /></Ico></Slot>
          <Slot $w={51} $up={1}><Ico s={21} c="#a0a0a0"><path d="M1 18.500L7 4l6 14.500M3.200 13.500h7.600M11.800 4.500c1.200.8 2 2.200 2.200 4M14.300 1.500c2.400 1.500 4 4 4.300 7" /></Ico></Slot>
          <Slot $w={50}><Ico c="#b4b4b4"><path d={STAR} /></Ico></Slot>
        </AddressBar>
        <BrowserTools />
      </Toolbar>

      <Body>
        <Page>
          <Rainbow />
          <AppHeader>
            <Deploy>Deploy</Deploy>
            <Kebab><svg width="4" height="16" viewBox="0 0 4 16" fill="#fafafa"><circle cx="2" cy="2" r="1.900" /><circle cx="2" cy="8" r="1.900" /><circle cx="2" cy="14" r="1.900" /></svg></Kebab>
          </AppHeader>
          <Expander>
            <ExpanderHead>
              Wikipedia Research
              <svg width="12" height="8" viewBox="0 0 12 8" fill="none" stroke="#fafafa" strokeWidth="1.900"><path d="M1 7l5-5 5 5" /></svg>
            </ExpanderHead>
            <InfoBox>
              {PARAGRAPHS.map((lines, i) => (
                <p key={i}>{lines.map((l) => <Line key={l}>{l}</Line>)}</p>
              ))}
            </InfoBox>
          </Expander>
          <Scrollbar />
        </Page>
        <Sidebar><SideIcons /></Sidebar>
      </Body>

      <Taskbar>
        <Widget>
          <svg width="24" height="34" viewBox="0 0 24 34"><defs><linearGradient id="fl" x1=".7" y1="0" x2=".4" y2="1"><stop stopColor="#f5a623" /><stop offset=".6" stopColor="#fb8a3c" /><stop offset="1" stopColor="#f3567c" /></linearGradient></defs><path d="M14 0c1.500 4.500 7 6.500 7 13 0 2.500-1 4.500-2.500 6h-13C3.500 17.500 2.500 15 3 12.500c.3-1.200.8-2.200 1.500-3 .3 1.800 1 2.700 2 3C6 7 9.500 3.500 14 0z" fill="url(#fl)" /><path d="M1 17.500h21.500c0 4-3 7-7.500 7H8.500c-4.500 0-7.500-3-7.500-7z" fill="#4c9af2" /><path d="M9 24.500h5.500l-1 8c-.3 1-3.200 1-3.500 0z" fill="#2b62d9" /></svg>
          <WidgetText>Olympic Games<span>Today’s events</span></WidgetText>
        </Widget>
        <AppButton>
          <svg width="29" height="29" viewBox="0 0 29 29"><defs><linearGradient id="wn" gradientUnits="userSpaceOnUse" x1="0" y1="0" x2="29" y2="29"><stop stopColor="#7fe7ff" /><stop offset="1" stopColor="#0b94f5" /></linearGradient></defs><path d="M1 0h13v14H0V1zM15 0h13l1 1v13H15zM0 15h14v14H1l-1-1zM15 15h14v13l-1 1H15z" fill="url(#wn)" /></svg>
        </AppButton>
        <SearchPill>
          <Ico s={19} w={1.7} c="#fff"><circle cx="8.500" cy="8" r="6.500" /><path d="M13.200 13l5.300 5.500" /></Ico>
          Search
        </SearchPill>
        <TaskApps />
        <Tray>
          <Slot $w={40} $up={2}><svg width="14" height="9" viewBox="0 0 14 9" fill="none" stroke="#fff" strokeWidth="1.600" strokeLinecap="round"><path d="M1 8l6-6 6 6" /></svg></Slot>
          <Slot $w={40} $up={2}><svg width="21" height="14" viewBox="0 0 21 14"><path d="M4 12C1.500 12 .5 10.500.5 8.500S2 5 4.500 5C5.500 2 7.500.5 10.500.5c3 0 5 1.500 5.500 4.500 3 .3 4.500 2 4.500 4z" fill="#9fa3a8" /><path d="M4.500 13.500c-1.500 0-2.700-1-2.700-2.300 0-1 .7-1.700 1.700-2.200L9 5.500l7 1c2.700 0 4.500 1.500 4.500 3.700 0 2-1.500 3.300-3.700 3.300z" fill="#fff" /></svg></Slot>
          <TrayText $w={56}><span>ENG</span><span>IN</span></TrayText>
          <Slot $w={38} $up={2}><Ico s={20} w={1.3} c="#fff"><path d="M1 8c5-5 13-5 18 0M3.700 10.900c3.500-3.500 9.100-3.500 12.600 0M6.400 13.700c2-2 5.200-2 7.200 0" /><circle cx="10" cy="16.200" r="1.200" fill="#fff" /></Ico></Slot>
          <Slot $w={21}><Ico s={21} w={1.2} c="#fff"><path d="M1 7.500h3l4-4.200v13.400l-4-4.200H1zM10.500 7.500c1 1.500 1 3.500 0 5M13 5.500c2 2.700 2 6.300 0 9" /><path d="M15.700 3.500c3 4 3 9 0 13" stroke="#6f7883" /></Ico></Slot>
          <Slot $w={39} $up={3}><svg width="21" height="16" viewBox="0 0 21 16" fill="none" stroke="#fff" strokeWidth="1.300"><path d="M7 3h8.500c1.500 0 2.500 1 2.500 2.500v6c0 1.500-1 2.500-2.500 2.500H4.500C3 14 2 13 2 11.500V9" /><path d="M18.800 6.500h1.200v4h-1.200z" fill="#fff" /><path d="M8 5.500h4.500v6H4.500V9.500H6z" fill="#fff" stroke="none" /><path d="M5 0L1 6h2.500L2.500 9.500 7 4H4.500z" fill="#fff" stroke="none" /></svg></Slot>
          <TrayText $w={88} $right><span>11:27</span><span>08-08-2024</span></TrayText>
          <Slot $w={39}><Ico s={20} w={1.3} c="#fff"><path d="M10 1.500A6 6 0 0 0 4 7.500v4L2.500 15c-.2.500 0 .9.600.9h13.800c.6 0 .8-.4.600-.9L16 11.500v-4a6 6 0 0 0-6-6zM8 16.300c.2 1.200 1 1.900 2 1.900s1.800-.7 2-1.900" /></Ico></Slot>
          <Slot $w={54}>
            <svg width="30" height="29" viewBox="0 0 30 29"><defs><linearGradient id="pa" x1="1" y1="0" x2="0" y2="1"><stop stopColor="#2a7be8" /><stop offset=".5" stopColor="#35b2b0" /><stop offset="1" stopColor="#e8d43a" /></linearGradient><linearGradient id="pb" x1="0" y1="0" x2="0" y2="1"><stop stopColor="#b45cf0" /><stop offset="1" stopColor="#f5707c" /></linearGradient></defs><path d="M14 .5h6c2 0 2.500 1.500 3 3.500l1 4h-8z" fill="#1d4fc4" /><path d="M8 .5h9c-1.500 1-2 3-2.500 5L11 16c-.7 2-2 3.500-4 3.500H3.500C1 19.500 0 18 .6 15.500L3.500 4.500C4.200 2 5.500.5 8 .5z" fill="url(#pa)" /><path d="M20 8h5.500c2.500 0 3.700 1.700 3 4.500L26 22H13l3.500-10.500C17.300 9 18 8 20 8z" fill="url(#pb)" /><rect x="7" y="19" width="23" height="10" rx="2" fill="#fdc50c" /><text x="18.500" y="27.100" textAnchor="middle" fontFamily="Open Sans" fontWeight="700" fontSize="8.300" letterSpacing=".6" fill="#222">PRE</text></svg>
          </Slot>
        </Tray>
      </Taskbar>
    </Desktop>
  );
}
